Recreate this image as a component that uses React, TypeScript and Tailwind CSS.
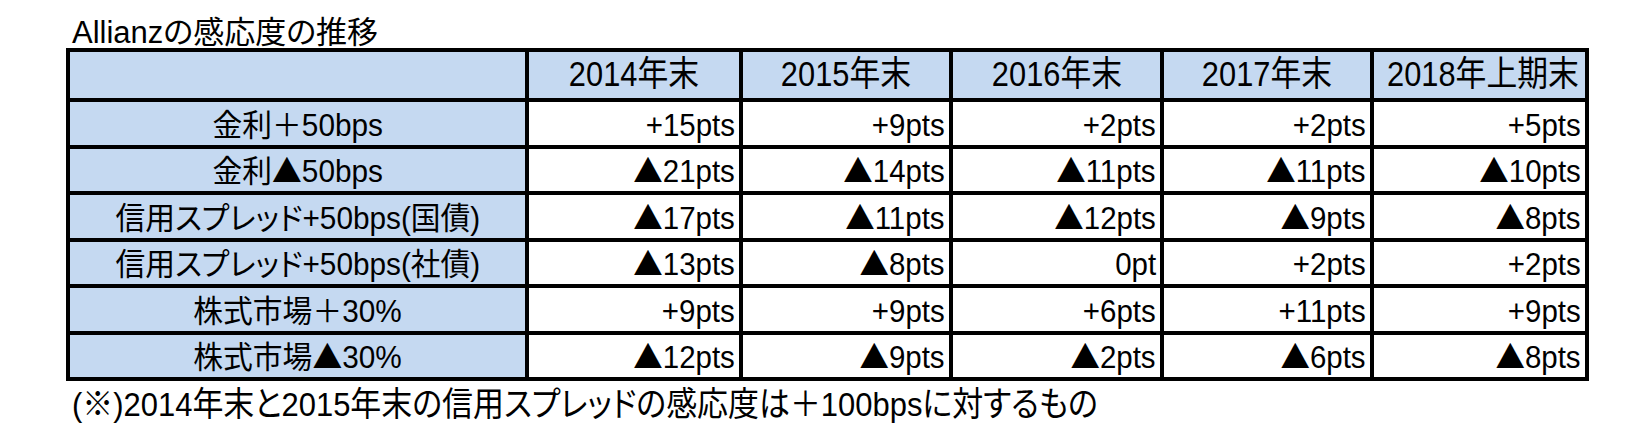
const years = ["2014年末", "2015年末", "2016年末", "2017年末", "2018年上期末"];

const rows = [
  ["金利＋50bps", "+15pts", "+9pts", "+2pts", "+2pts", "+5pts"],
  ["金利▲50bps", "▲21pts", "▲14pts", "▲11pts", "▲11pts", "▲10pts"],
  ["信用スプレッド+50bps(国債)", "▲17pts", "▲11pts", "▲12pts", "▲9pts", "▲8pts"],
  ["信用スプレッド+50bps(社債)", "▲13pts", "▲8pts", "0pt", "+2pts", "+2pts"],
  ["株式市場＋30%", "+9pts", "+9pts", "+6pts", "+11pts", "+9pts"],
  ["株式市場▲30%", "▲12pts", "▲9pts", "▲2pts", "▲6pts", "▲8pts"],
];

// the triangle comes from the CJK font, Liberation's one is too small
const withTri = (s: string) =>
  s.split(/(▲)/).map((part, i) =>
    part === "▲" ? (
      <span key={i} className="font-['Noto_Sans_CJK_JP']">
        ▲
      </span>
    ) : (
      part
    )
  );

function App() {
  return (
    <div className="w-[1650px] h-[445px] overflow-hidden bg-white pl-[66px] pt-[17px] text-black font-['Liberation_Sans','Noto_Sans_CJK_JP',sans-serif] [font-feature-settings:'palt']">
      <div className="pl-[6px] text-[31px] leading-none whitespace-nowrap">
        Allianzの感応度の推移
      </div>

      <table className="table-fixed border-collapse w-[1519px]">
        <colgroup>
          <col className="w-[459px]" />
          <col className="w-[214px]" />
          <col className="w-[210px]" />
          <col className="w-[211px]" />
          <col className="w-[210px]" />
          <col className="w-[215px]" />
        </colgroup>
        <thead>
          <tr className="h-[50px] bg-[#c5d9f1]">
            <th className="border-4 border-black"></th>
            {years.map((y) => (
              <th key={y} className="border-4 border-black text-center font-normal text-[35px] leading-none pb-[4px] whitespace-nowrap">
                <span className="inline-block scale-x-[0.88] origin-center">{y}</span>
              </th>
            ))}
          </tr>
        </thead>
        <tbody>
          {rows.map((r) => (
            <tr key={r[0]} className="h-[46.5px]">
              <td className="border-4 border-black bg-[#c5d9f1] text-center align-bottom pb-[4px] text-[31px] leading-none whitespace-nowrap">
                <span className="inline-block scale-x-[0.96] origin-center">{withTri(r[0])}</span>
              </td>
              {r.slice(1).map((v, i) => (
                <td key={i} className="border-4 border-black text-right align-bottom pb-[4px] pr-[4px] text-[31px] leading-none whitespace-nowrap">
                  <span className="inline-block scale-x-[0.95] origin-right">{withTri(v)}</span>
                </td>
              ))}
            </tr>
          ))}
        </tbody>
      </table>

      <div className="pl-[6px] pt-[6px] text-[34px] leading-none whitespace-nowrap">
        <span className="inline-block scale-x-[0.91] origin-left">
          (※)2014年末と2015年末の信用スプレッドの感応度は＋100bpsに対するもの
        </span>
      </div>
    </div>
  );
}

export default App;
